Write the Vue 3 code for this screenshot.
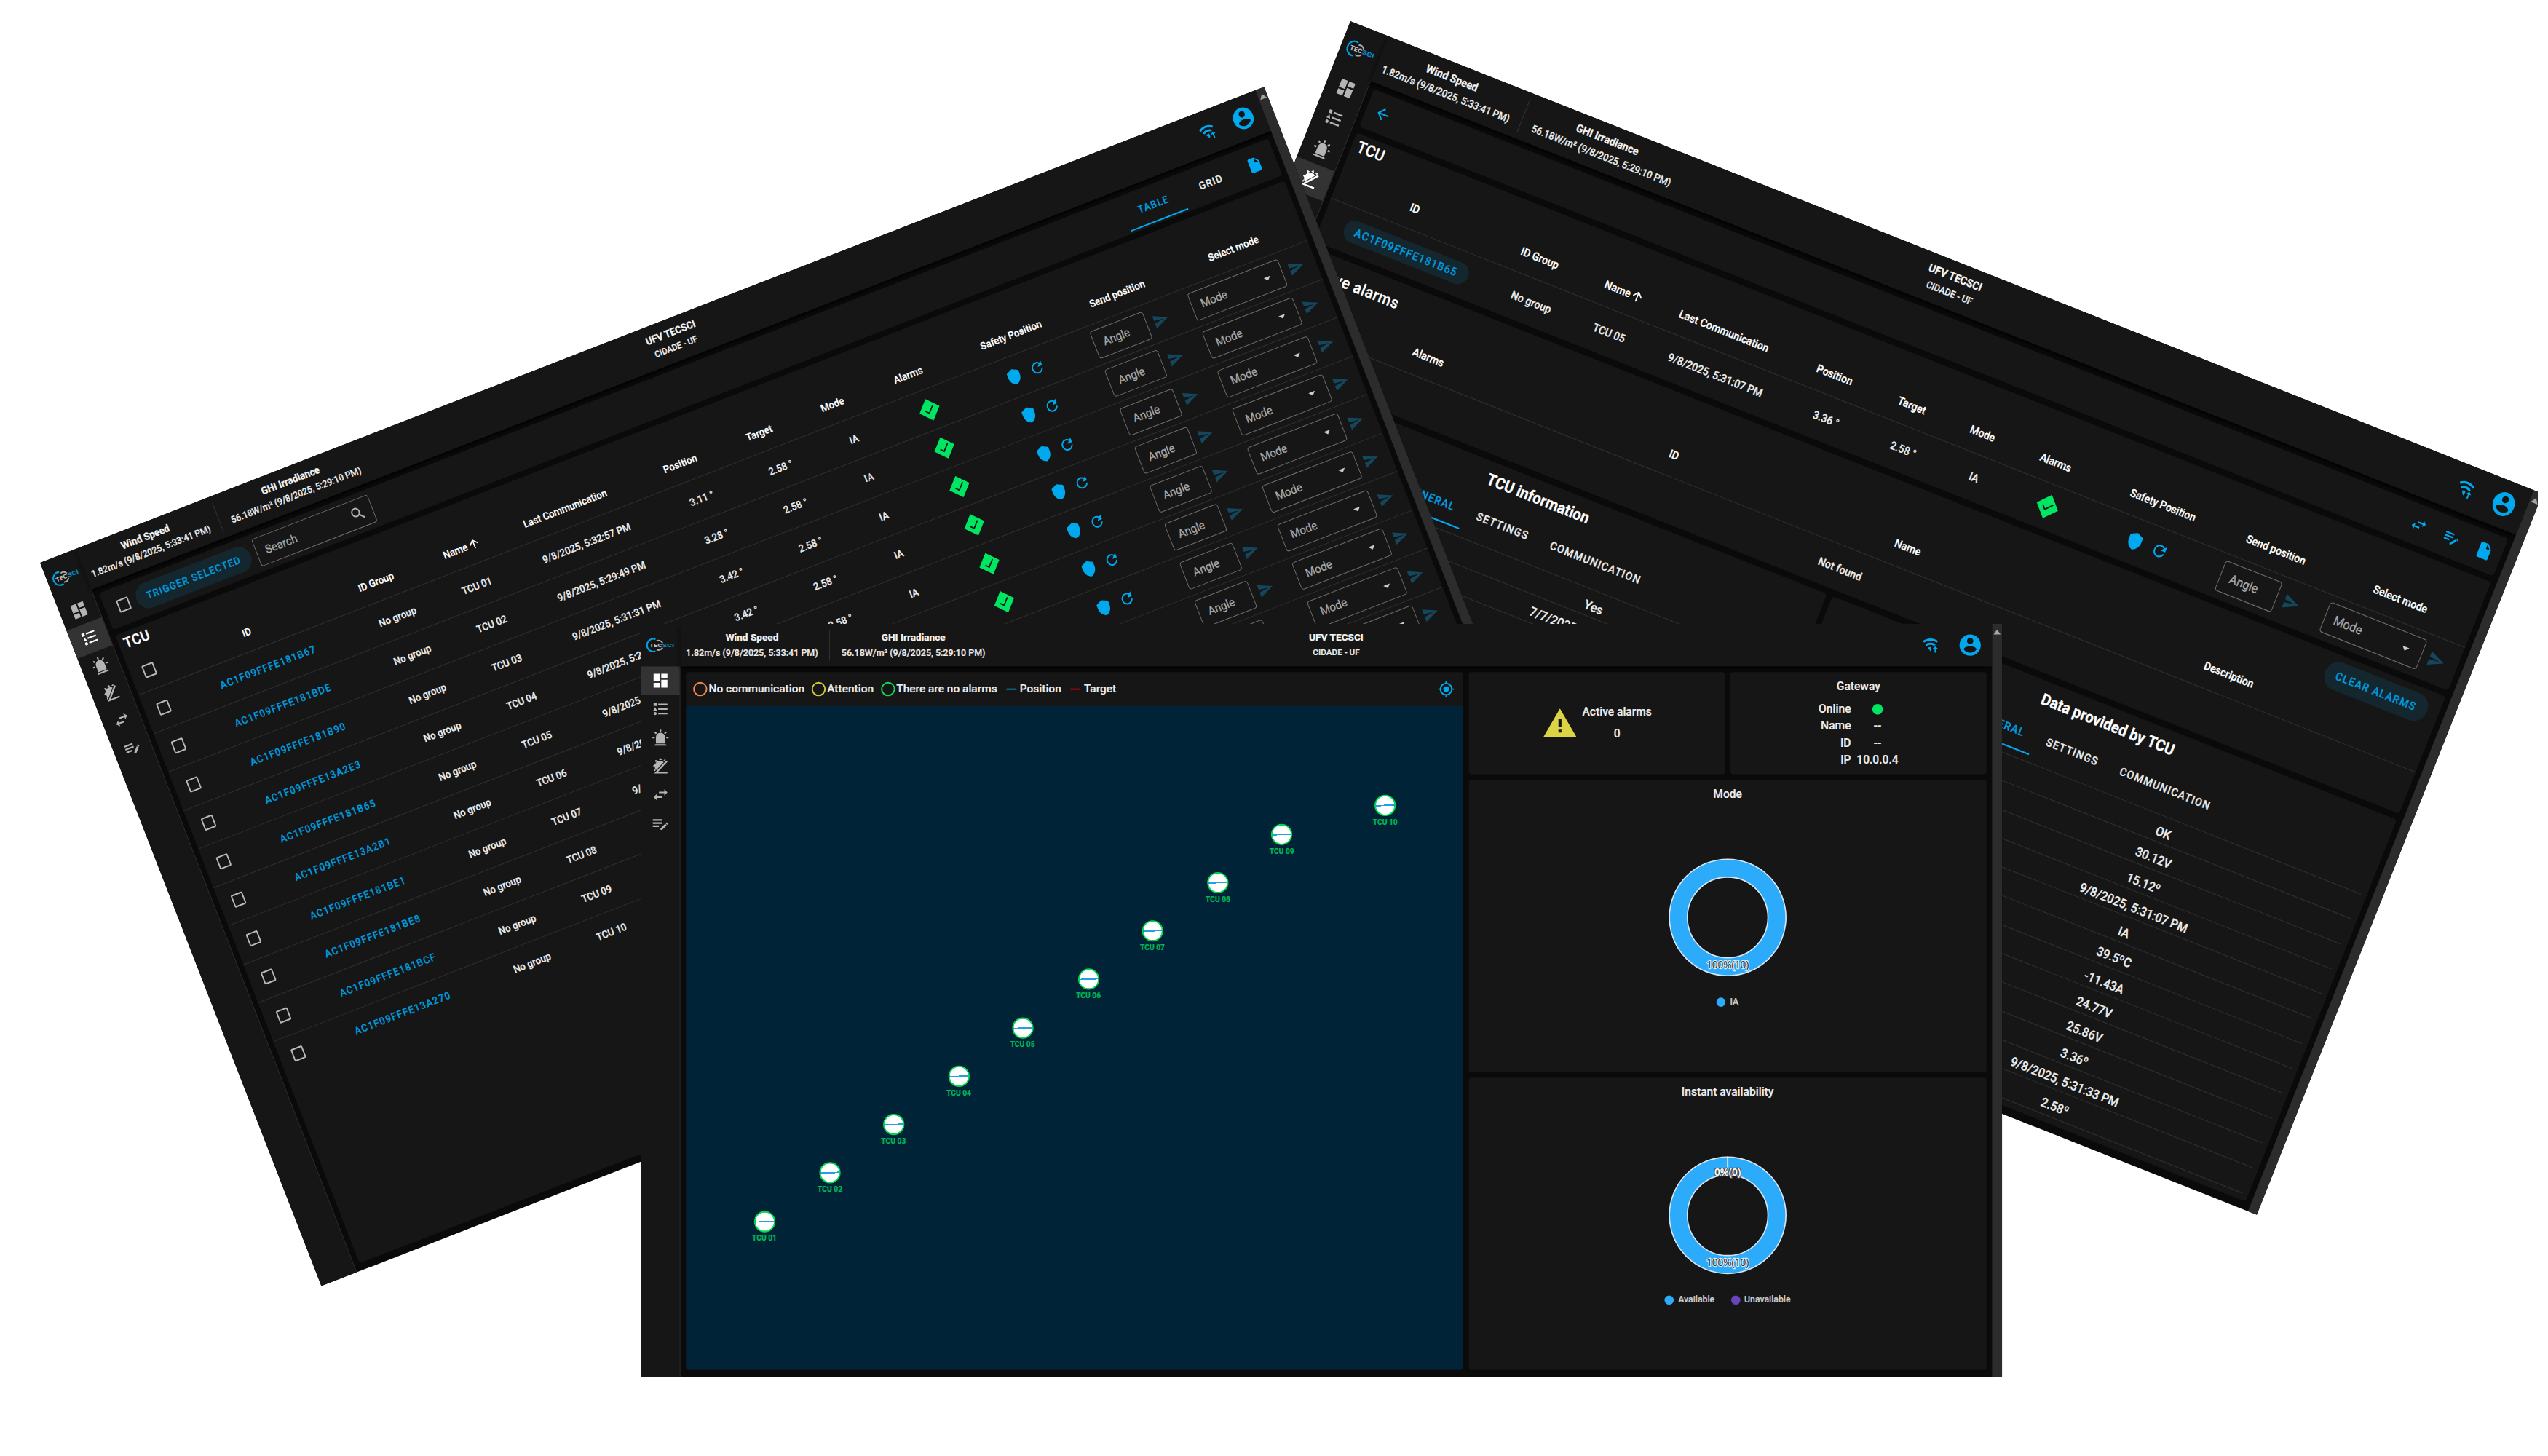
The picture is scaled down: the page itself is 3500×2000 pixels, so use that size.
<script setup>
const icons = {
    dashboard: 'M13,3V9H21V3M13,21H21V11H13M3,21H11V15H3M3,13H11V3H3V13Z',
    list: 'M5,9.5L7.5,14H2.5L5,9.5M3,4H7V8H3V4M5,20A2,2 0 0,0 7,18A2,2 0 0,0 5,16A2,2 0 0,0 3,18A2,2 0 0,0 5,20M9,5V7H21V5H9M9,19H21V17H9V19M9,13H21V11H9V13Z',
    alarm: 'M6,6.9L3.87,4.78L5.28,3.37L7.4,5.5L6,6.9M13,1V4H11V1H13M20.13,4.78L18,6.9L16.6,5.5L18.72,3.37L20.13,4.78M4.5,10.5V12.5H1.5V10.5H4.5M19.5,10.5H22.5V12.5H19.5V10.5M6,20H18A2,2 0 0,1 20,22H4A2,2 0 0,1 6,20M12,5A6,6 0 0,1 18,11V19H6V11A6,6 0 0,1 12,5Z',
    sun: 'M19.6,4.4L21.2,5.9L8.6,19.3H21V21.3H3.8L19.6,4.4M16.2,6.6L6.6,16.8A5.8,5.8 0 0,1 16.2,6.6M12,1L14,3.8H10L12,1M5.2,3.6L8.6,4.2L5.8,7L5.2,3.6M2,11.2L4.9,9.2V13.2L2,11.2M3.6,18.6L4.4,15.2L6.2,17L3.6,18.6M18.6,2.6L18.4,5L15.6,4L18.6,2.6Z',
    swap: 'M21,9L17,5V8H10V10H17V13M7,11L3,15L7,19V16H14V14H7V11Z',
    edit: 'M2,6V8H14V6H2M2,10V12H14V10H2M20.04,10.13C19.9,10.13 19.76,10.19 19.65,10.3L18.65,11.3L20.7,13.35L21.7,12.35C21.92,12.14 21.92,11.79 21.7,11.58L20.42,10.3C20.31,10.19 20.18,10.13 20.04,10.13M18.07,11.88L12,17.94V20H14.06L20.12,13.93L18.07,11.88M2,14V16H10V14H2Z',
    account: 'M12,19.2C9.5,19.2 7.29,17.92 6,16C6.03,14 10,12.9 12,12.9C14,12.9 17.97,14 18,16C16.71,17.92 14.5,19.2 12,19.2M12,5A3,3 0 0,1 15,8A3,3 0 0,1 12,11A3,3 0 0,1 9,8A3,3 0 0,1 12,5M12,2A10,10 0 0,0 2,12A10,10 0 0,0 12,22A10,10 0 0,0 22,12C22,6.47 17.5,2 12,2Z',
    wifi: 'M12,2.5C7.95,2.5 4.21,3.84 1.2,6.1L3,8.5C5.5,6.62 8.62,5.5 12,5.5C15.38,5.5 18.5,6.62 21,8.5L22.8,6.1C19.79,3.84 16.05,2.5 12,2.5M12,8.5C9.3,8.5 6.81,9.39 4.8,10.9L6.6,13.3C8.1,12.17 9.97,11.5 12,11.5C14.03,11.5 15.9,12.17 17.4,13.3L19.2,10.9C17.19,9.39 14.7,8.5 12,8.5M8.4,15.7L12,20.5L13.3,18.8V14.6C11.5,14.3 9.8,14.7 8.4,15.7M18.8,13.5L22.3,17H19.8V22.5H17.8V17H15.3L18.8,13.5Z',
    target: 'M12,8A4,4 0 0,1 16,12A4,4 0 0,1 12,16A4,4 0 0,1 8,12A4,4 0 0,1 12,8M3.05,13H1V11H3.05C3.5,6.83 6.83,3.5 11,3.05V1H13V3.05C17.17,3.5 20.5,6.83 20.95,11H23V13H20.95C20.5,17.17 17.17,20.5 13,20.95V23H11V20.95C6.83,20.5 3.5,17.17 3.05,13M12,5A7,7 0 0,0 5,12A7,7 0 0,0 12,19A7,7 0 0,0 19,12A7,7 0 0,0 12,5Z',
    alert: 'M13 14H11V9H13M13 18H11V16H13M1 21H23L12 2L1 21Z',
    magnify: 'M9.5,3A6.5,6.5 0 0,1 16,9.5C16,11.11 15.41,12.59 14.44,13.73L14.71,14H15.5L20.5,19L19,20.5L14,15.5V14.71L13.73,14.44C12.59,15.41 11.11,16 9.5,16A6.5,6.5 0 0,1 3,9.5A6.5,6.5 0 0,1 9.5,3M9.5,5C7,5 5,7 5,9.5C5,12 7,14 9.5,14C12,14 14,12 14,9.5C14,7 12,5 9.5,5Z',
    checkbox: 'M19,3H5C3.89,3 3,3.89 3,5V19A2,2 0 0,0 5,21H19A2,2 0 0,0 21,19V5C21,3.89 20.1,3 19,3M19,5V19H5V5H19Z',
    circle: 'M12,20A8,8 0 0,1 4,12A8,8 0 0,1 12,4A8,8 0 0,1 20,12A8,8 0 0,1 12,20M12,2A10,10 0 0,0 2,12A10,10 0 0,0 12,22A10,10 0 0,0 22,12A10,10 0 0,0 12,2Z',
    minus: 'M19,13H5V11H19V13Z',
    shield: 'M12,1L3,5V11C3,16.55 6.84,21.74 12,23C17.16,21.74 21,16.55 21,11V5L12,1Z',
    refresh: 'M17.65,6.35C16.2,4.9 14.21,4 12,4A8,8 0 0,0 4,12A8,8 0 0,0 12,20C15.73,20 18.84,17.45 19.73,14H17.65C16.83,16.33 14.61,18 12,18A6,6 0 0,1 6,12A6,6 0 0,1 12,6C13.66,6 15.14,6.69 16.22,7.78L13,11H20V4L17.65,6.35Z',
    send: 'M2,21L23,12L2,3V10L17,12L2,14V21Z',
    file: 'M13,9V3.5L18.5,9M6,2C4.89,2 4,2.89 4,4V20A2,2 0 0,0 6,22H18A2,2 0 0,0 20,20V8L14,2H6Z',
    back: 'M20,11V13H8L13.5,18.5L12.08,19.92L4.16,12L12.08,4.08L13.5,5.5L8,11H20Z',
    up: 'M13,20H11V8L5.5,13.5L4.08,12.08L12,4.16L19.92,12.08L18.5,13.5L13,8V20Z',
    down: 'M7,10L12,15L17,10H7Z',
    ok: 'M12,1L23,12L12,23L1,12L12,1M10.6,16L17.2,9.4L16.3,8.5L10.6,14.2L8,11.6L7.1,12.5L10.6,16Z'
};

const menu = ['dashboard', 'list', 'alarm', 'sun', 'swap', 'edit'];

const makeColumns = (widths) => {
    const titles = ['ID', 'ID Group', 'Name', 'Last Communication', 'Position', 'Target', 'Mode', 'Alarms', 'Safety Position', 'Send position', 'Select mode'];
    return titles.map((title, i) => ({ title, width: widths[i], sortable: i < 8, sorted: title === 'Name' }));
};

const tcus = [
    { id: 'AC1F09FFFE181B67', name: 'TCU 01', last: '9/8/2025, 5:32:57 PM', position: '3.11' },
    { id: 'AC1F09FFFE181BDE', name: 'TCU 02', last: '9/8/2025, 5:29:49 PM', position: '3.28' },
    { id: 'AC1F09FFFE181B90', name: 'TCU 03', last: '9/8/2025, 5:31:31 PM', position: '3.42' },
    { id: 'AC1F09FFFE13A2E3', name: 'TCU 04', last: '9/8/2025, 5:29:12 PM', position: '3.42' },
    { id: 'AC1F09FFFE181B65', name: 'TCU 05', last: '9/8/2025, 5:31:07 PM', position: '3.36' },
    { id: 'AC1F09FFFE13A2B1', name: 'TCU 06', last: '9/8/2025, 5:30:41 PM', position: '3.40' },
    { id: 'AC1F09FFFE181BE1', name: 'TCU 07', last: '9/8/2025, 5:31:22 PM', position: '3.38' },
    { id: 'AC1F09FFFE181BE8', name: 'TCU 08', last: '9/8/2025, 5:32:03 PM', position: '3.31' },
    { id: 'AC1F09FFFE181BCF', name: 'TCU 09', last: '9/8/2025, 5:30:15 PM', position: '3.29' },
    { id: 'AC1F09FFFE13A270', name: 'TCU 10', last: '9/8/2025, 5:31:54 PM', position: '3.33' }
];

const windows = [
    { id: 'detail', active: 'sun', columns: makeColumns([245, 121, 107, 204, 120, 106, 101, 113, 179, 152, 212]), rows: [tcus[4]] },
    { id: 'list', active: 'list', columns: makeColumns([273, 133, 116, 228, 133, 115, 115, 122, 179, 154, 211]), rows: tcus },
    { id: 'dashboard', active: 'dashboard' }
];

const legend = [
    { icon: 'circle', color: '#f5854a', label: 'No communication' },
    { icon: 'circle', color: '#d5cb3a', label: 'Attention' },
    { icon: 'circle', color: '#12d75a', label: 'There are no alarms' },
    { icon: 'minus', color: '#00a5ef', label: 'Position' },
    { icon: 'minus', color: '#e60012', label: 'Target' }
];

// pin centres inside the map area
const pins = [
    { name: 'TCU 01', x: 110.5, y: 727 },
    { name: 'TCU 02', x: 203, y: 658 },
    { name: 'TCU 03', x: 292.6, y: 590.4 },
    { name: 'TCU 04', x: 384.7, y: 522.4 },
    { name: 'TCU 05', x: 474.6, y: 454.5 },
    { name: 'TCU 06', x: 567.5, y: 385.5 },
    { name: 'TCU 07', x: 657.8, y: 317.4 },
    { name: 'TCU 08', x: 750.2, y: 249.2 },
    { name: 'TCU 09', x: 840.2, y: 181.4 },
    { name: 'TCU 10', x: 986, y: 140.8 }
];

const charts = [
    { title: 'Mode', legend: [{ label: 'IA', color: '#2dabfb' }] },
    {
        title: 'Instant availability',
        split: true,
        legend: [
            { label: 'Available', color: '#2dabfb' },
            { label: 'Unavailable', color: '#6844bd' }
        ]
    }
];

const gateway = [
    { label: 'Name', value: '--' },
    { label: 'ID', value: '--' },
    { label: 'IP', value: '10.0.0.4' }
];

const alarmColumns = [
    { title: 'Alarms', width: 428 },
    { title: 'ID', width: 292 },
    { title: 'Name', width: 392 },
    { title: 'Description', width: 548 }
];

const details = [
    {
        title: 'TCU information',
        values: ['Yes', '7/7/2025, 9:54:31 AM', '', '', '', '', '', '', '', '', '', '']
    },
    {
        title: 'Data provided by TCU',
        values: ['OK', '30.12V', '15.12º', '9/8/2025, 5:31:07 PM', 'IA', '39.5ºC', '-11.43A', '24.77V', '25.86V', '3.36º', '9/8/2025, 5:31:33 PM', '2.58º']
    }
];
</script>

<template>
    <div class="stage">
        <section v-for="win in windows" :key="win.id" class="window" :class="win.id">
            <aside class="sidebar">
                <svg class="logo" viewBox="0 0 42 24">
                    <path d="M14,3.5A9,9 0 1,0 14,20.5" fill="none" stroke="#00a0e3" stroke-width="2.2" />
                    <path d="M15.5,5.8A6.6,6.6 0 0,1 24,9M24,15.4A6.6,6.6 0 0,1 15.5,18.4" fill="none" stroke="#a9a9a9" stroke-width="2" />
                    <text x="5.5" y="14.8" class="logo-tec" textLength="17.5" lengthAdjust="spacingAndGlyphs">TEC</text>
                    <text x="23.5" y="14.8" class="logo-sci" textLength="17" lengthAdjust="spacingAndGlyphs">SCI</text>
                </svg>
                <div v-for="item in menu" :key="item" class="menu-item" :class="{ active: item === win.active }">
                    <svg class="icon" viewBox="0 0 24 24"><path :d="icons[item]" /></svg>
                </div>
            </aside>

            <div class="page">
                <header class="topbar">
                    <div class="measures">
                        <div class="measure">
                            <b>Wind Speed</b>
                            <span>1.82m/s (9/8/2025, 5:33:41 PM)</span>
                        </div>
                        <div class="measure">
                            <b>GHI Irradiance</b>
                            <span>56.18W/m² (9/8/2025, 5:29:10 PM)</span>
                        </div>
                    </div>
                    <div class="plant">
                        <b>UFV TECSCI</b>
                        <span>CIDADE - UF</span>
                    </div>
                    <div class="user">
                        <svg class="icon" viewBox="0 0 24 24"><path :d="icons.wifi" /></svg>
                        <svg class="icon avatar" viewBox="0 0 24 24"><path :d="icons.account" /></svg>
                    </div>
                </header>

                <main v-if="win.id === 'dashboard'" class="content dashboard-grid">
                    <div class="card map-card">
                        <div class="legend">
                            <span v-for="item in legend" :key="item.label" class="legend-item">
                                <svg class="icon" viewBox="0 0 24 24" :style="{ fill: item.color }"><path :d="icons[item.icon]" /></svg>{{ item.label }}
                            </span>
                            <svg class="icon locate" viewBox="0 0 24 24"><path :d="icons.target" /></svg>
                        </div>
                        <div class="map">
                            <div v-for="pin in pins" :key="pin.name" class="pin" :style="{ left: pin.x + 'px', top: pin.y + 'px' }">
                                <i class="pin-dot"></i>
                                <span>{{ pin.name }}</span>
                            </div>
                        </div>
                    </div>
                    <div class="side">
                        <div class="summary">
                            <div class="card alarms">
                                <svg class="icon" viewBox="0 0 24 24"><path :d="icons.alert" /></svg>
                                <div class="alarms-text">
                                    <span>Active alarms</span>
                                    <span>0</span>
                                </div>
                            </div>
                            <div class="card gateway">
                                <p>Gateway</p>
                                <dl>
                                    <dt>Online</dt>
                                    <dd><i class="online"></i></dd>
                                    <template v-for="item in gateway" :key="item.label">
                                        <dt>{{ item.label }}</dt>
                                        <dd>{{ item.value }}</dd>
                                    </template>
                                </dl>
                            </div>
                        </div>
                        <div v-for="chart in charts" :key="chart.title" class="card chart">
                            <p>{{ chart.title }}</p>
                            <svg class="donut" viewBox="0 0 180 180">
                                <circle cx="90" cy="90" r="69.5" fill="none" stroke="#d7e6f5" stroke-width="27" />
                                <circle cx="90" cy="90" r="69.5" fill="none" stroke="#2dabfb" stroke-width="23.6" />
                                <path v-if="chart.split" d="M90,7V34" stroke="#d7e6f5" stroke-width="2" />
                                <text x="90" y="162" class="label-full">100%(10)</text>
                                <text v-if="chart.split" x="90" y="34.5" class="label-none">0%(0)</text>
                            </svg>
                            <div class="chart-legend">
                                <span v-for="item in chart.legend" :key="item.label"><i :style="{ background: item.color }"></i>{{ item.label }}</span>
                            </div>
                        </div>
                    </div>
                </main>

                <main v-else class="content">
                    <div v-if="win.id === 'list'" class="card toolbar">
                        <svg class="icon check" viewBox="0 0 24 24"><path :d="icons.checkbox" /></svg>
                        <span class="button trigger">TRIGGER SELECTED</span>
                        <div class="field search">
                            Search
                            <svg class="icon" viewBox="0 0 24 24"><path :d="icons.magnify" /></svg>
                        </div>
                        <div class="tabs">
                            <span class="tab selected">TABLE</span>
                            <span class="tab">GRID</span>
                        </div>
                        <svg class="icon blue tool" viewBox="0 0 24 24"><path :d="icons.file" /></svg>
                    </div>
                    <div v-else class="card toolbar">
                        <svg class="icon blue tool" viewBox="0 0 24 24"><path :d="icons.back" /></svg>
                        <div class="spacer"></div>
                        <svg v-for="name in ['swap', 'edit', 'file']" :key="name" class="icon blue tool" viewBox="0 0 24 24"><path :d="icons[name]" /></svg>
                    </div>

                    <div class="card tcu-card">
                        <h2>TCU</h2>
                        <table>
                            <colgroup>
                                <col v-if="win.id === 'list'" width="55" />
                                <col v-for="col in win.columns" :key="col.title" :width="col.width" />
                            </colgroup>
                            <thead>
                                <tr>
                                    <th v-if="win.id === 'list'">
                                        <svg class="icon check" viewBox="0 0 24 24"><path :d="icons.checkbox" /></svg>
                                    </th>
                                    <th v-for="col in win.columns" :key="col.title">
                                        <span class="th-label" :class="{ sortable: col.sortable }">
                                            {{ col.title }}
                                            <svg v-if="col.sorted" class="icon sort" viewBox="0 0 24 24"><path :d="icons.up" /></svg>
                                        </span>
                                    </th>
                                </tr>
                            </thead>
                            <tbody>
                                <tr v-for="tcu in win.rows" :key="tcu.id">
                                    <td v-if="win.id === 'list'">
                                        <svg class="icon check" viewBox="0 0 24 24"><path :d="icons.checkbox" /></svg>
                                    </td>
                                    <td>
                                        <span class="tcu-id">{{ tcu.id }}</span>
                                    </td>
                                    <td>No group</td>
                                    <td>{{ tcu.name }}</td>
                                    <td>{{ tcu.last }}</td>
                                    <td>{{ tcu.position }} °</td>
                                    <td>2.58 °</td>
                                    <td>IA</td>
                                    <td>
                                        <svg class="icon ok" viewBox="0 0 24 24"><path :d="icons.ok" fill-rule="evenodd" /></svg>
                                    </td>
                                    <td>
                                        <div class="cell safety">
                                            <svg class="icon blue" viewBox="0 0 24 24"><path :d="icons.shield" /></svg>
                                            <svg class="icon blue" viewBox="0 0 24 24"><path :d="icons.refresh" /></svg>
                                        </div>
                                    </td>
                                    <td>
                                        <div class="cell">
                                            <div class="field angle">Angle</div>
                                            <svg class="icon send" viewBox="0 0 24 24"><path :d="icons.send" /></svg>
                                        </div>
                                    </td>
                                    <td>
                                        <div class="cell">
                                            <div class="field mode">
                                                Mode
                                                <svg class="icon" viewBox="0 0 24 24"><path :d="icons.down" /></svg>
                                            </div>
                                            <svg class="icon send" viewBox="0 0 24 24"><path :d="icons.send" /></svg>
                                        </div>
                                    </td>
                                </tr>
                            </tbody>
                        </table>
                    </div>

                    <template v-if="win.id === 'detail'">
                        <div class="card alarm-card">
                            <div class="alarm-title">
                                <h2>Active alarms</h2>
                                <span class="button">CLEAR ALARMS</span>
                            </div>
                            <table>
                                <colgroup>
                                    <col v-for="col in alarmColumns" :key="col.title" :width="col.width" />
                                </colgroup>
                                <thead>
                                    <tr>
                                        <th v-for="col in alarmColumns" :key="col.title">
                                            <span class="th-label sortable">{{ col.title }}</span>
                                        </th>
                                    </tr>
                                </thead>
                                <tbody>
                                    <tr>
                                        <td colspan="4">Not found</td>
                                    </tr>
                                </tbody>
                            </table>
                        </div>
                        <div class="details">
                            <div v-for="block in details" :key="block.title" class="card detail-card">
                                <h3>{{ block.title }}</h3>
                                <div class="tabs">
                                    <span class="tab selected">GENERAL</span>
                                    <span class="tab">SETTINGS</span>
                                    <span class="tab">COMMUNICATION</span>
                                </div>
                                <ul>
                                    <li v-for="(value, index) in block.values" :key="index">{{ value }}</li>
                                </ul>
                            </div>
                        </div>
                    </template>
                </main>
            </div>

            <div class="scrollbar"><i></i></div>
        </section>
    </div>
</template>

<style>
body {
    margin: 0;
    background: #fff;
}
</style>

<style scoped>
.stage {
    position: relative;
    width: 3486px;
    height: 2000px;
    overflow: hidden;
    font-family: Roboto, "Liberation Sans", sans-serif;
}

.window {
    position: absolute;
    display: flex;
    width: 1920px;
    height: 1062px;
    overflow: hidden;
    background: #0a0a0a;
    color: #ececec;
    font-size: 14px;
    font-weight: 500;
    -webkit-text-stroke: 0.25px currentColor;
    transform-origin: 0 0;
}

.window.detail {
    left: 1855px;
    top: 29px;
    width: 1745.4px;
    height: 965.4px;
    transform: rotate(21.62deg) scale(1.0095, 1.1042);
}

.window.list {
    left: 54.5px;
    top: 772.7px;
    transform: rotate(-21.25deg) scale(0.9396, 1.0038);
}

.window.dashboard {
    left: 880px;
    top: 857px;
    transform: scale(0.974);
}

.icon {
    display: block;
    flex: none;
    width: 24px;
    height: 24px;
    fill: currentColor;
}

.blue {
    color: #00a8ee;
}

/* sidebar */
.sidebar {
    flex: none;
    box-sizing: border-box;
    width: 56px;
    background: #161616;
    border-right: 1.5px solid #2b2b2b;
}

.logo {
    display: block;
    width: 42px;
    height: 24px;
    margin: 18px 0 18px 7px;
    overflow: visible;
}

.logo-tec,
.logo-sci {
    font-size: 8px;
    font-weight: 900;
    fill: #bdbdbd;
    stroke: #161616;
    stroke-width: 1.2px;
    paint-order: stroke;
    -webkit-text-stroke: 0;
}

.logo-sci {
    fill: #0a86c2;
}

.menu-item {
    display: flex;
    align-items: center;
    justify-content: center;
    height: 40.3px;
    color: #b4b4b4;
}

.menu-item .icon {
    width: 26px;
    height: 26px;
}

.menu-item.active {
    background: #333;
    color: #fff;
}

/* page */
.page {
    flex: 1;
    display: flex;
    flex-direction: column;
    min-width: 0;
}

.topbar {
    flex: none;
    display: grid;
    grid-template-columns: 1fr auto 1fr;
    align-items: center;
    height: 60px;
    background: #161616;
    box-shadow: 0 2px 6px #000;
}

.measures {
    display: flex;
}

.measure,
.plant {
    display: flex;
    flex-direction: column;
    align-items: center;
    font-size: 12px;
    line-height: 21px;
    white-space: nowrap;
}

.measure {
    padding: 0 16px 1px;
    font-size: 12.85px;
}

.measure:first-child {
    padding-left: 8px;
    border-right: 1px solid #333;
}

.measure b,
.plant b {
    font-size: 14px;
    font-weight: 700;
    color: #f4f4f4;
}

.user {
    display: flex;
    align-items: center;
    justify-content: flex-end;
    gap: 26px;
    padding-right: 13px;
    color: #00a8ee;
}

.user .avatar {
    width: 36px;
    height: 36px;
}

.scrollbar {
    flex: none;
    width: 14px;
    background: #2c2c2c;
}

.detail .scrollbar {
    width: 13.6px;
}

.scrollbar i {
    display: block;
    margin: 8px auto 0;
    width: 0;
    border: 5px solid transparent;
    border-top: 0;
    border-bottom: 7px solid #a5a5a5;
}

.content {
    flex: 1;
    display: flex;
    flex-direction: column;
    gap: 8px;
    min-height: 0;
    padding: 8px 8px 10px;
}

.card {
    background: #161616;
    border-radius: 4px;
}

/* dashboard */
.content.dashboard-grid {
    flex-direction: row;
}

.map-card {
    flex: none;
    display: flex;
    flex-direction: column;
    width: 1096px;
    overflow: hidden;
}

.legend {
    display: flex;
    align-items: center;
    gap: 8px;
    height: 47.6px;
    padding: 0 12px 0 8px;
    font-size: 15.9px;
}

.legend-item {
    display: flex;
    align-items: center;
}

.locate {
    margin-left: auto;
    color: #00a8ee;
}

.map {
    position: relative;
    flex: 1;
    background: #012338;
}

.pin {
    position: absolute;
    width: 60px;
    margin: -15px 0 0 -30px;
    text-align: center;
    font-size: 10.5px;
    font-weight: 700;
    line-height: 14px;
    color: #00b755;
}

.pin-dot {
    display: block;
    box-sizing: border-box;
    width: 30px;
    height: 30px;
    margin: 0 auto 2px;
    border: 2px solid #00dc50;
    border-radius: 50%;
    background: linear-gradient(177.5deg, #fff 46.5%, #249fe4 46.5%, #249fe4 53.5%, #fff 53.5%);
}

.side {
    flex: 1;
    display: flex;
    flex-direction: column;
    gap: 8px;
    font-size: 16px;
    line-height: 24px;
}

.side p {
    margin: 0;
    text-align: center;
}

.summary {
    display: flex;
    gap: 8px;
    height: 144px;
}

.summary .card {
    flex: 1;
}

.alarms {
    display: flex;
    align-items: center;
    justify-content: center;
    gap: 6px;
}

.alarms .icon {
    width: 51px;
    height: 51px;
    fill: #dcd444;
}

.alarms-text {
    display: flex;
    flex-direction: column;
    align-items: center;
    gap: 7px;
    padding-bottom: 1px;
}

.gateway p {
    padding-top: 8px;
}

.gateway dl {
    display: grid;
    grid-template-columns: auto auto;
    justify-content: center;
    column-gap: 8px;
    margin: 8px 0 0;
}

.gateway dt {
    text-align: right;
}

.gateway dd {
    display: flex;
    align-items: center;
    justify-content: center;
    margin: 0;
}

.online {
    width: 15px;
    height: 15px;
    border-radius: 50%;
    background: #00e663;
}

.chart {
    flex: 1;
    display: flex;
    flex-direction: column;
    align-items: center;
}

.chart p {
    padding-top: 8px;
}

.donut {
    display: block;
    width: 180px;
    height: 180px;
    margin-top: 72px;
    overflow: visible;
}

.donut text {
    text-anchor: middle;
    font-family: "Noto Sans", sans-serif;
    font-size: 14px;
    -webkit-text-stroke: 0;
    paint-order: stroke;
}

.donut .label-full {
    fill: #333;
    stroke: #dcebf7;
    stroke-width: 2.4px;
    font-weight: 400;
}

.donut .label-none {
    fill: #fff;
    stroke: #4a4a4a;
    stroke-width: 2.4px;
    font-weight: 600;
}

.chart-legend {
    display: flex;
    gap: 23px;
    margin-top: 17px;
    font-size: 12.6px;
    color: #ccc;
}

.chart-legend span {
    display: flex;
    align-items: center;
    gap: 6px;
}

.chart-legend i {
    width: 13px;
    height: 13px;
    border-radius: 50%;
}

/* toolbars */
.toolbar {
    flex: none;
    display: flex;
    align-items: center;
    box-sizing: border-box;
    height: 50px;
}

.list .toolbar {
    height: 54px;
    padding: 0 8px;
}

.toolbar .check {
    margin: 0 8px;
}

.tool {
    margin: 0 12px;
}

.spacer {
    flex: 1;
}

.check {
    color: #b9b9b9;
}

.button {
    display: flex;
    align-items: center;
    height: 36px;
    padding: 0 16px;
    border-radius: 18px;
    background: #14262e;
    color: #0099dc;
    letter-spacing: 1.25px;
}

.field {
    position: relative;
    display: flex;
    align-items: center;
    justify-content: space-between;
    box-sizing: border-box;
    height: 40px;
    padding: 0 12px 0 13px;
    border: 1px solid #6e6e6e;
    border-radius: 4px;
    font-size: 16px;
    font-weight: 400;
    color: #a9a9a9;
}

.search {
    width: 182px;
    margin-left: 9px;
    padding-right: 10px;
}

.search .icon {
    color: #b4b4b4;
}

.tabs {
    display: flex;
    justify-content: center;
}

.toolbar .tabs {
    align-self: stretch;
    margin-left: auto;
    align-items: center;
}

.tab {
    box-sizing: border-box;
    display: flex;
    align-items: center;
    justify-content: center;
    min-width: 90px;
    height: 48px;
    padding: 2px 16px 0;
    border-bottom: 2px solid transparent;
    letter-spacing: 1.25px;
}

.tab.selected {
    color: #0099dc;
    border-color: #00a8ee;
}

/* tables */
h2 {
    margin: 0;
    padding-left: 8px;
    font-size: 20px;
    font-weight: 500;
    letter-spacing: 0.25px;
    color: #fff;
}

table {
    width: 100%;
    table-layout: fixed;
    border-collapse: separate;
    border-spacing: 0;
}

th,
td {
    box-sizing: border-box;
    padding: 0;
    text-align: center;
    font-weight: 500;
}

th {
    color: #fff;
}

td {
    height: 56.5px;
    border-top: 1px solid #2f2f2f;
}

th .check,
td .check,
td .ok {
    margin: 0 auto;
}

.tcu-card {
    flex: 1;
    overflow: hidden;
}

.detail .tcu-card {
    flex: none;
    height: 145px;
}

.tcu-card h2 {
    height: 34px;
    line-height: 31px;
}

.tcu-card th {
    height: 53px;
}

.th-label {
    display: inline-flex;
    align-items: center;
}

.th-label.sortable {
    position: relative;
    margin-right: 22px;
}

.sort {
    position: absolute;
    left: 100%;
    width: 20px;
    height: 20px;
}

.tcu-id {
    letter-spacing: 1.25px;
    color: #0099dc;
}

.detail .tcu-id {
    display: inline-block;
    padding: 0 16px;
    border-radius: 14px;
    line-height: 28px;
    background: #14262e;
}

.ok {
    width: 34px;
    height: 34px;
    color: #00e663;
}

.cell {
    display: flex;
    align-items: center;
    justify-content: center;
    gap: 9px;
}

.safety {
    gap: 12px;
}

.angle {
    width: 83px;
}

.mode {
    width: 142px;
    padding-right: 11px;
}

.mode .icon {
    color: #ccc;
}

.send {
    color: #14465d;
}

/* detail window */
.alarm-card {
    flex: none;
    height: 157px;
}

.alarm-title {
    display: flex;
    align-items: center;
    justify-content: space-between;
    height: 52px;
    padding-right: 16px;
}

.alarm-title h2 {
    letter-spacing: 0.65px;
}

.alarm-card th {
    height: 49px;
    padding-bottom: 6px;
}

.details {
    flex: 1;
    display: flex;
    gap: 8px;
}

.detail-card {
    flex: 1;
    padding: 0 8px;
}

h3 {
    margin: 0;
    text-align: center;
    font-size: 20px;
    font-weight: 700;
    line-height: 44px;
    padding-bottom: 2px;
    color: #fff;
}

.detail-card ul {
    margin: 8px 0 0;
    padding: 0;
    list-style: none;
    border-top: 1px solid #2f2f2f;
    font-size: 16px;
}

.detail-card li {
    box-sizing: border-box;
    height: 33.3px;
    padding: 6px 0 0 249px;
    border-bottom: 1px solid #2f2f2f;
    text-align: center;
    line-height: 27px;
}
</style>
